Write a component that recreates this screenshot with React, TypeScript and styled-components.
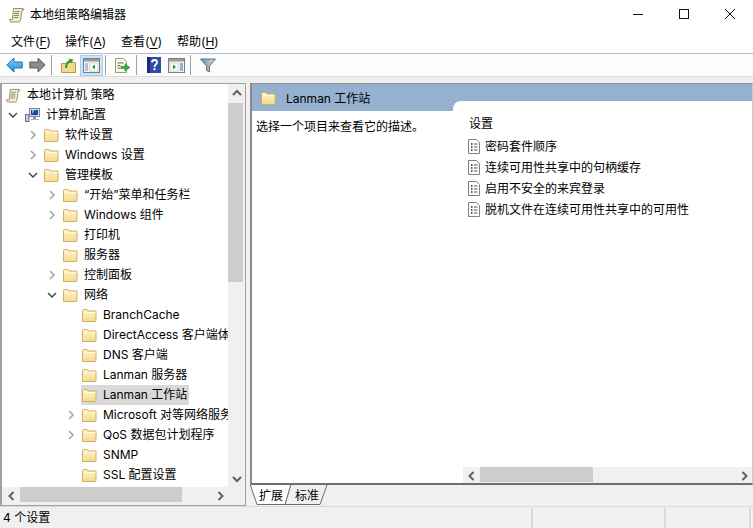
import React from "react";
import styled, { createGlobalStyle } from "styled-components";

const GlobalStyle = createGlobalStyle`
  html, body {
    margin: 0;
    padding: 0;
    background: #ffffff;
  }
  #root {
    width: 753px;
    height: 528px;
  }
`;

const Window = styled.div`
  width: 753px;
  height: 528px;
  display: flex;
  flex-direction: column;
  overflow: hidden;
  background: #f0f0f0;
  color: #000;
  font-family: Inter, "Noto Sans CJK SC", sans-serif;
  font-size: 12px;
  line-height: 20px;
`;

/* title bar */

const TitleBar = styled.header`
  height: 30px;
  flex: none;
  display: flex;
  align-items: flex-start;
  background: #fff;
  padding-left: 9px;
`;

const TitleIcon = styled.span`
  display: flex;
  margin-top: 7px;
`;

const TitleText = styled.span`
  margin: 5px 0 0 5px;
  flex: 1;
`;

const WinButton = styled.span`
  width: 46px;
  height: 28px;
  display: flex;
  align-items: center;
  justify-content: center;
`;

/* menu */

const MenuBar = styled.nav`
  height: 23px;
  flex: none;
  display: flex;
  padding-left: 11px;
  background: #fff;
  border-bottom: 1px solid #b9bac6;
`;

const MenuItem = styled.span<{ $width: number }>`
  width: ${(p) => p.$width}px;
  line-height: 24px;
  white-space: nowrap;
  u {
    text-underline-offset: 2px;
  }
`;

/* toolbar */

const Toolbar = styled.div`
  height: 22px;
  flex: none;
  display: flex;
  align-items: center;
  padding-left: 3px;
  background: #fdfdfd;
  border-bottom: 1px solid #dcdcdc;
`;

const ToolButton = styled.span<{ $active?: boolean }>`
  width: 23px;
  height: 21px;
  box-sizing: border-box;
  display: flex;
  align-items: center;
  justify-content: center;
  background: ${(p) => (p.$active ? "#cce4f7" : "transparent")};
  border: 1px solid ${(p) => (p.$active ? "#99d1ff" : "transparent")};
`;

const ToolSep = styled.span`
  width: 1px;
  height: 20px;
  margin: 0 5px 0 2px;
  background: #a0a0a0;
`;

/* workspace */

const Workspace = styled.div`
  flex: 1;
  min-height: 0;
  display: flex;
  padding-top: 6px;
  background: #f0f0f0;
`;

const TreePane = styled.aside`
  width: 246px;
  flex: none;
  box-sizing: border-box;
  margin-right: 4px;
  padding-bottom: 1px;
  display: grid;
  grid-template-columns: 226px 17px;
  grid-template-rows: 1fr 17px;
  border: 1px solid #a0a0a0;
  border-left-width: 2px;
  background: #f0f0f0;
`;

const Tree = styled.div`
  overflow: hidden;
  background: #fff;
  padding-top: 1px;
  min-width: 0;
  min-height: 0;
`;

const TreeRow = styled.div<{ $indent: number }>`
  height: 20px;
  display: flex;
  align-items: center;
  white-space: nowrap;
  padding-left: ${(p) => p.$indent}px;
`;

const Chevron = styled.span`
  width: 12px;
  height: 20px;
  flex: none;
  margin-right: 4px;
  display: flex;
  align-items: center;
  justify-content: center;
`;

const NodeIcon = styled.span`
  min-width: 16px;
  height: 16px;
  flex: none;
  display: flex;
  align-items: center;
  justify-content: center;
`;

const NodeLabel = styled.span`
  margin-left: 3px;
  padding: 0 2px 0 3px;
`;

const SelectedBand = styled.span`
  display: flex;
  align-items: center;
  height: 20px;
  background: #d9d9d9;
`;

const VScroll = styled.div`
  display: flex;
  flex-direction: column;
  background: #f0f0f0;
`;

const ThumbV = styled.div`
  height: 179px;
  width: 15px;
  background: #cdcdcd;
`;

const ScrollEnd = styled.span<{ $tall?: boolean }>`
  width: 17px;
  height: ${(p) => (p.$tall ? 19 : 17)}px;
  flex: none;
  display: flex;
  align-items: center;
  justify-content: center;
`;

const VTrack = styled.div`
  flex: 1;
  min-height: 0;
`;

const HScroll = styled.div`
  display: flex;
  align-items: flex-start;
  background: #f0f0f0;
  height: 16px;
  padding-left: 1px;
`;

const ThumbH = styled.div<{ $width: number }>`
  width: ${(p) => p.$width}px;
  height: 15px;
  flex: none;
  background: #cdcdcd;
`;

const HTrack = styled.div`
  flex: 1;
`;

const Corner = styled.div`
  background: #f0f0f0;
`;

/* right side */

const DetailPane = styled.section`
  flex: 1;
  min-width: 0;
  display: flex;
  flex-direction: column;
`;

const DetailFrame = styled.div`
  height: 402px;
  flex: none;
  box-sizing: border-box;
  display: flex;
  flex-direction: column;
  background: #fff;
  border-top: 1px solid #8f8f8f;
  border-left: 2px solid #8a8a8a;
  border-right: 1px solid #c8c8c8;
  border-bottom: 2px solid #6e6e6e;
`;

const DetailHeader = styled.div`
  height: 27px;
  flex: none;
  display: flex;
  align-items: center;
  padding: 1px 0 0 9px;
  box-sizing: border-box;
  background: #96b0cf;
  gap: 10px;
`;

const HeaderLabel = styled.span`
  padding-top: 2px;
`;

const DetailBody = styled.div`
  flex: 1;
  min-height: 0;
  display: flex;
`;

const Description = styled.div`
  width: 201px;
  flex: none;
  padding: 6px 0 0 4px;
  box-sizing: border-box;
  white-space: nowrap;
`;

const SettingsPanel = styled.div`
  flex: 1;
  min-width: 0;
  margin-top: -10px;
  display: flex;
  flex-direction: column;
  background: #fff;
  border-top-left-radius: 8px;
  z-index: 1;
`;

const SettingsList = styled.div`
  flex: 1;
  min-height: 0;
  padding: 12px 0 0 16px;
`;

const SettingsHeading = styled.div`
  height: 22px;
  line-height: 22px;
  margin-bottom: 1px;
`;

const SettingRow = styled.div`
  height: 21px;
  display: flex;
  align-items: center;
  gap: 5px;
  margin-left: -1px;
  white-space: nowrap;
`;

const SettingsScroll = styled.div`
  margin-left: 10px;
  height: 16px;
  flex: none;
  display: flex;
  background: #f0f0f0;
`;

const TabStrip = styled.div`
  position: relative;
  height: 20px;
  flex: none;
  display: flex;
  padding-left: 9px;
`;

const TabOutline = styled.svg`
  position: absolute;
  left: 0;
  top: 0;
`;

const Tab = styled.span`
  position: relative;
  width: 36px;
  line-height: 22px;
`;

/* status bar */

const StatusBar = styled.footer`
  height: 22px;
  flex: none;
  display: flex;
  box-sizing: border-box;
  padding-top: 1px;
  border-top: 1px solid #d9d9d9;
  background: #f0f0f0;
`;

const StatusCell = styled.div<{ $width: number }>`
  width: ${(p) => p.$width}px;
  flex: none;
  box-sizing: border-box;
  padding-left: 3px;
  border-right: 2px solid #d9d9d9;
  line-height: 19px;
`;

/* icons */

const Folder = () => (
  <svg width="15" height="14" viewBox="0 0 15 14">
    <defs>
      <linearGradient id="fg" x1="0" y1="0" x2="0" y2="1">
        <stop offset="0" stopColor="#fff4c8" />
        <stop offset="1" stopColor="#f6d98c" />
      </linearGradient>
    </defs>
    <path d="M.5 13.5V2.5q0-1 1-1h3.5l1 1.5h8v9.5q0 1-1 1z" fill="url(#fg)" stroke="#d2ad62" />
    <path d="M1.5 4.5h12" stroke="#fff8dc" />
  </svg>
);

const Scroll = ({ size = 16 }: { size?: number }) => (
  <svg width={size} height={size} viewBox="0 0 16 16">
    <path d="M4.5 1.5h9.5q1 0 .8 1.5H13l-1.5 10.5q-.3 1.5-1.5 1.5H2q-1.5 0-1.3-2.5H3.5z" fill="#f5ecc9" stroke="#8d8467" strokeWidth=".9" />
    <path d="M5.5 4.5h5M5 6.5h5M5 8.5h5M4.5 10.5h5" stroke="#77705a" strokeWidth=".8" />
  </svg>
);

const Computer = () => (
  <svg width="17" height="16" viewBox="0 0 17 16">
    <rect x="6.5" y="1.5" width="10" height="8" fill="#d8dde4" stroke="#7c8794" />
    <rect x="8" y="3" width="7" height="5" fill="#1f3fb0" />
    <path d="M9 3h3l-3 4z" fill="#78b4f4" />
    <rect x="10" y="10" width="3" height="2" fill="#8a939e" />
    <rect x="8" y="12" width="8" height="1" fill="#a8afb8" />
    <rect x="2.5" y="7.5" width="3.5" height="7" fill="#c6ccd4" stroke="#6c7682" />
  </svg>
);

const Open = () => (
  <svg width="9" height="10" viewBox="0 0 9 10">
    <path d="M2 1l4 4-4 4" fill="none" stroke="#a6a6a6" strokeWidth="1.6" />
  </svg>
);

const Expanded = () => (
  <svg width="10" height="9" viewBox="0 0 10 9">
    <path d="M1 2l4 4 4-4" fill="none" stroke="#404040" strokeWidth="1.4" />
  </svg>
);

const ArrowGlyph = ({ dir }: { dir: "up" | "down" | "left" | "right" }) => {
  const d = {
    up: "M2 7l4-4 4 4",
    down: "M2 4l4 4 4-4",
    left: "M7.5 2l-4 4 4 4",
    right: "M4.5 2l4 4-4 4",
  }[dir];
  return (
    <svg width="12" height="12" viewBox="0 0 12 12">
      <path d={d} fill="none" stroke="#606060" strokeWidth="2" />
    </svg>
  );
};

const NavArrow = ({ back }: { back?: boolean }) => (
  <svg width="17" height="16" viewBox="0 0 17 16">
    <defs>
      <linearGradient id="bl" x1="0" y1="0" x2="0" y2="1">
        <stop offset="0" stopColor="#7fd0fa" />
        <stop offset="1" stopColor="#1f8fe0" />
      </linearGradient>
    </defs>
    {back ? (
      <path d="M.8 8L8 1v4h8.2v6H8v4z" fill="url(#bl)" stroke="#1874b8" strokeLinejoin="round" />
    ) : (
      <path d="M16.2 8L9 1v4H.8v6H9v4z" fill="#8c8c8c" stroke="#5e5e5e" strokeLinejoin="round" />
    )}
  </svg>
);

const UpFolder = () => (
  <svg width="15" height="17" viewBox="0 0 15 17">
    <path d="M.5 15.5V6.5h4l1-1h9v10z" fill="#f4d88e" stroke="#b89650" />
    <path d="M5 11q0-5 4-7" fill="none" stroke="#2f9a3a" strokeWidth="2" />
    <path d="M7.5 1.5l5 1-2.5 4z" fill="#2f9a3a" />
  </svg>
);

const PaneIcon = ({ right }: { right?: boolean }) => (
  <svg width="17" height="15" viewBox="0 0 17 15">
    <rect x=".5" y=".5" width="16" height="14" fill="#f4f4f4" stroke="#7d7d7d" />
    <rect x="1" y="1" width="15" height="2.5" fill="#9a9a9a" />
    {right ? (
      <>
        <rect x="2" y="5" width="8" height="8" fill="#fff" stroke="#b0b0b0" strokeWidth=".5" />
        <path d="M5 6.5l3 2.5-3 2.5z" fill="#1f9a3a" />
        <path d="M12 6h3M12 8h3M12 10h3M12 12h3" stroke="#2b6ab5" />
      </>
    ) : (
      <>
        <path d="M2 6h3M2 8h3M2 10h3M2 12h3" stroke="#6b8fb5" />
        <rect x="7" y="5" width="8" height="8" fill="#fff" stroke="#b0b0b0" strokeWidth=".5" />
        <path d="M12 6.5l-3 2.5 3 2.5z" fill="#1f9a3a" />
      </>
    )}
  </svg>
);

const ExportIcon = () => (
  <svg width="17" height="17" viewBox="0 0 17 17">
    <path d="M1.5 1.5h8l3 3v11h-11z" fill="#fbf6e0" stroke="#a09a80" />
    <path d="M3.5 6h6M3.5 8.5h3M3.5 11h3" stroke="#6a6a5c" />
    <path d="M7 9.5h4V7l5 3.5-5 3.5v-2.5H7z" fill="#35b04a" stroke="#23803a" strokeWidth=".6" />
  </svg>
);

const HelpIcon = () => (
  <svg width="14" height="16" viewBox="0 0 14 16">
    <rect width="14" height="16" fill="#2f4aa8" />
    <rect x="0" y="0" width="3" height="16" fill="#1a2c78" />
    <path d="M5 5.5q0-2.5 2.5-2.5T10 5.2C10 7.5 7.5 7.5 7.5 10" fill="none" stroke="#fff" strokeWidth="1.8" />
    <rect x="6.5" y="11.2" width="2" height="2" fill="#fff" />
  </svg>
);

const FilterIcon = () => (
  <svg width="16" height="15" viewBox="0 0 16 15">
    <defs>
      <linearGradient id="fl" x1="0" y1="0" x2="1" y2="0">
        <stop offset="0" stopColor="#6f8c9e" />
        <stop offset="1" stopColor="#d0dde5" />
      </linearGradient>
    </defs>
    <path d="M.5 1h15L9.5 8v6l-3-1.5V8z" fill="url(#fl)" stroke="#62747f" strokeLinejoin="round" />
  </svg>
);

const SettingIcon = () => (
  <svg width="12" height="15" viewBox="0 0 12 15">
    <path d="M.5.5h8l3 3v11H.5z" fill="#fff" stroke="#808080" />
    <path d="M3 5h1.5M3 8h1.5M3 11h1.5" stroke="#202020" strokeWidth="1.3" />
    <path d="M6 5h3.5M6 8h3.5M6 11h3.5" stroke="#505050" />
  </svg>
);

type Node = { label: string; level: number; state?: "open" | "closed"; selected?: boolean };

const nodes: Node[] = [
  { label: "软件设置", level: 2, state: "closed" },
  { label: "Windows 设置", level: 2, state: "closed" },
  { label: "管理模板", level: 2, state: "open" },
  { label: "\u201C开始\u201D菜单和任务栏", level: 3, state: "closed" },
  { label: "Windows 组件", level: 3, state: "closed" },
  { label: "打印机", level: 3 },
  { label: "服务器", level: 3 },
  { label: "控制面板", level: 3, state: "closed" },
  { label: "网络", level: 3, state: "open" },
  { label: "BranchCache", level: 4 },
  { label: "DirectAccess 客户端体验设置", level: 4 },
  { label: "DNS 客户端", level: 4 },
  { label: "Lanman 服务器", level: 4 },
  { label: "Lanman 工作站", level: 4, selected: true },
  { label: "Microsoft 对等网络服务", level: 4, state: "closed" },
  { label: "QoS 数据包计划程序", level: 4, state: "closed" },
  { label: "SNMP", level: 4 },
  { label: "SSL 配置设置", level: 4 },
];

const settings = ["密码套件顺序", "连续可用性共享中的句柄缓存", "启用不安全的来宾登录", "脱机文件在连续可用性共享中的可用性"];

const App: React.FC = () => {
  return (
    <Window>
      <GlobalStyle />
      <TitleBar>
        <TitleIcon>
          <Scroll />
        </TitleIcon>
        <TitleText>本地组策略编辑器</TitleText>
        <WinButton>
          <svg width="10" height="10"><path d="M0 5.5h10" stroke="#111" /></svg>
        </WinButton>
        <WinButton>
          <svg width="10" height="10"><rect x=".5" y=".5" width="9" height="9" fill="none" stroke="#111" /></svg>
        </WinButton>
        <WinButton>
          <svg width="10" height="10"><path d="M0 0l10 10M10 0L0 10" stroke="#111" /></svg>
        </WinButton>
      </TitleBar>

      <MenuBar>
        <MenuItem $width={54}>文件(<u>F</u>)</MenuItem>
        <MenuItem $width={56}>操作(<u>A</u>)</MenuItem>
        <MenuItem $width={56}>查看(<u>V</u>)</MenuItem>
        <MenuItem $width={56}>帮助(<u>H</u>)</MenuItem>
      </MenuBar>

      <Toolbar>
        <ToolButton><NavArrow back /></ToolButton>
        <ToolButton><NavArrow /></ToolButton>
        <ToolSep />
        <ToolButton><UpFolder /></ToolButton>
        <ToolButton $active><PaneIcon /></ToolButton>
        <ToolSep />
        <ToolButton><ExportIcon /></ToolButton>
        <ToolSep />
        <ToolButton><HelpIcon /></ToolButton>
        <ToolButton><PaneIcon right /></ToolButton>
        <ToolSep />
        <ToolButton><FilterIcon /></ToolButton>
      </Toolbar>

      <Workspace>
        <TreePane>
          <Tree>
            <TreeRow $indent={3}>
              <NodeIcon><Scroll size={15} /></NodeIcon>
              <NodeLabel>本地计算机 策略</NodeLabel>
            </TreeRow>
            <TreeRow $indent={5}>
              <Chevron><Expanded /></Chevron>
              <NodeIcon><Computer /></NodeIcon>
              <NodeLabel>计算机配置</NodeLabel>
            </TreeRow>
            {nodes.map((n) => (
              <TreeRow key={n.label} $indent={n.level * 19 - 13}>
                <Chevron>
                  {n.state === "open" && <Expanded />}
                  {n.state === "closed" && <Open />}
                </Chevron>
                {n.selected ? (
                  <SelectedBand>
                    <NodeIcon><Folder /></NodeIcon>
                    <NodeLabel>{n.label}</NodeLabel>
                  </SelectedBand>
                ) : (
                  <>
                    <NodeIcon><Folder /></NodeIcon>
                    <NodeLabel>{n.label}</NodeLabel>
                  </>
                )}
              </TreeRow>
            ))}
          </Tree>
          <VScroll>
            <ScrollEnd $tall><ArrowGlyph dir="up" /></ScrollEnd>
            <ThumbV />
            <VTrack />
            <ScrollEnd><ArrowGlyph dir="down" /></ScrollEnd>
          </VScroll>
          <HScroll>
            <ScrollEnd><ArrowGlyph dir="left" /></ScrollEnd>
            <ThumbH $width={162} />
            <HTrack />
            <ScrollEnd><ArrowGlyph dir="right" /></ScrollEnd>
          </HScroll>
          <Corner />
        </TreePane>

        <DetailPane>
          <DetailFrame>
            <DetailHeader>
              <Folder />
              <HeaderLabel>Lanman 工作站</HeaderLabel>
            </DetailHeader>
            <DetailBody>
              <Description>选择一个项目来查看它的描述。</Description>
              <SettingsPanel>
                <SettingsList>
                  <SettingsHeading>设置</SettingsHeading>
                  {settings.map((s) => (
                    <SettingRow key={s}>
                      <SettingIcon />
                      <span>{s}</span>
                    </SettingRow>
                  ))}
                </SettingsList>
                <SettingsScroll>
                  <ScrollEnd><ArrowGlyph dir="left" /></ScrollEnd>
                  <ThumbH $width={113} />
                  <HTrack />
                  <ScrollEnd><ArrowGlyph dir="right" /></ScrollEnd>
                </SettingsScroll>
              </SettingsPanel>
            </DetailBody>
          </DetailFrame>
          <TabStrip>
            <TabOutline width="90" height="20" viewBox="0 0 90 20">
              <path d="M40.5 0L35 19.5h35L77 0" fill="#f0f0f0" stroke="#6e6e6e" />
              <path d="M0 -1L7 19.5h28L41 -1z" fill="#fff" stroke="#6e6e6e" />
            </TabOutline>
            <Tab>扩展</Tab>
            <Tab>标准</Tab>
          </TabStrip>
        </DetailPane>
      </Workspace>

      <StatusBar>
        <StatusCell $width={533}>4 个设置</StatusCell>
        <StatusCell $width={133} />
        <StatusCell $width={85} />
      </StatusBar>
    </Window>
  );
};

export default App;
